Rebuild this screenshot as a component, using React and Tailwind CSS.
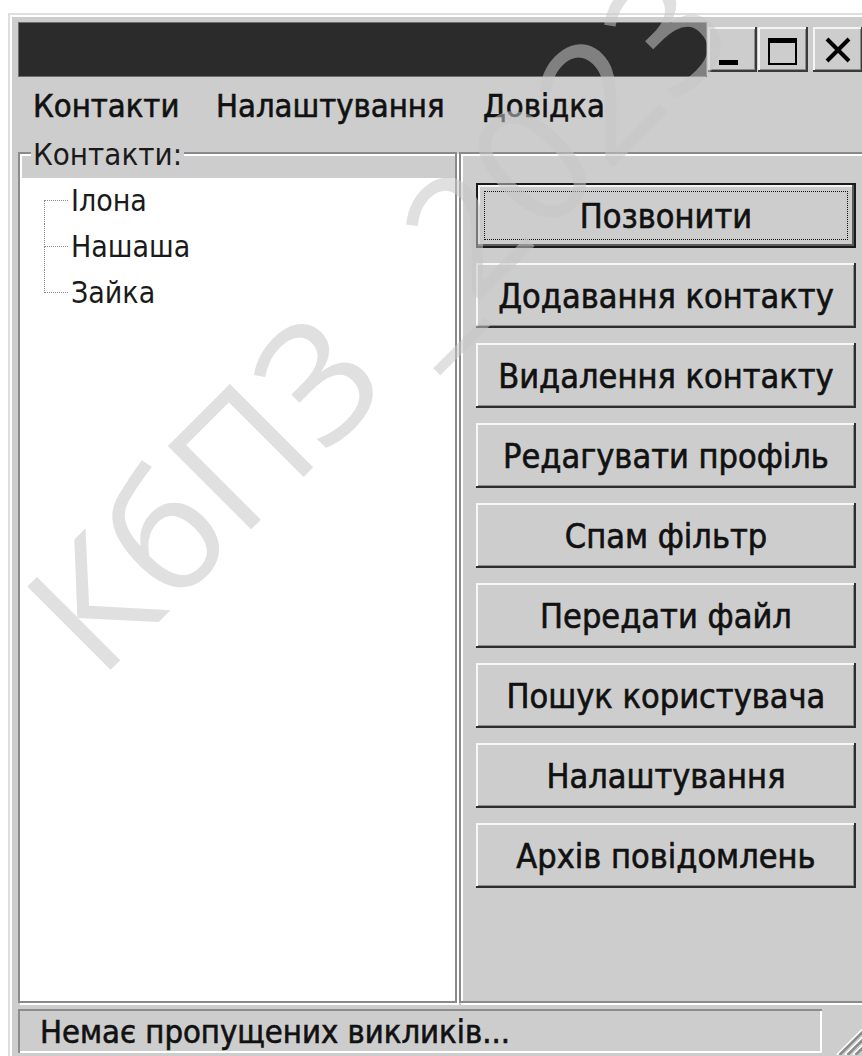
import React from "react";

const UI = "font-['DejaVu_Sans_Condensed','DejaVu_Sans',sans-serif]";

const buttons = [
  "Позвонити",
  "Додавання контакту",
  "Видалення контакту",
  "Редагувати профіль",
  "Спам фільтр",
  "Передати файл",
  "Пошук користувача",
  "Налаштування",
  "Архів повідомлень",
];

const contacts = ["Ілона", "Нашаша", "Зайка"];

function CaptionButton({ className, children }) {
  return (
    <div
      className={
        "h-[45px] bg-[#cdcdcd] flex shadow-[inset_-2px_-2px_0_#3a3a3a,inset_2px_2px_0_#f4f4f4,inset_-3px_-3px_0_#8c8c8c] " +
        className
      }
    >
      {children}
    </div>
  );
}

function ActionButton({ label, isDefault }) {
  if (isDefault) {
    return (
      <div className="w-[380px] h-[65px] border-2 border-[#1a1a1a] bg-[#cdcdcd] shadow-[inset_-2px_-2px_0_#5a5a5a,inset_2px_2px_0_#f4f4f4] p-[6px]">
        <div className="w-full h-full border border-dotted border-[#111111] flex items-center justify-center">
          <span className="text-[34px] leading-[38px] text-[#111111] [-webkit-text-stroke:0.6px_#111111]">
            {label}
          </span>
        </div>
      </div>
    );
  }
  return (
    <div className="w-[380px] h-[65px] bg-[#cdcdcd] shadow-[inset_-2px_-2px_0_#2e2e2e,inset_2px_2px_0_#f7f7f7,inset_-3px_-3px_0_#8c8c8c] flex items-center justify-center">
      <span className="text-[34px] leading-[38px] text-[#111111] [-webkit-text-stroke:0.6px_#111111]">
        {label}
      </span>
    </div>
  );
}

function TreeRow({ label, first, last }) {
  return (
    <div className="h-[46px] flex">
      <div className="ml-[24px] w-[24px] h-full flex flex-col">
        <div
          className={
            "h-1/2 border-b border-dotted border-[#8a8a8a] " +
            (first ? "" : "border-l")
          }
        />
        <div
          className={
            "h-1/2 border-dotted border-[#8a8a8a] " + (last ? "" : "border-l")
          }
        />
      </div>
      <div className="ml-[3px] flex items-center text-[30px] leading-[34px] text-[#1a1a1a]">
        {label}
      </div>
    </div>
  );
}

export default function App() {
  return (
    <div className={"relative w-[862px] h-[1056px] overflow-hidden bg-white " + UI}>
      {/* window */}
      <div className="ml-[8px] mt-[13px] w-[880px] h-[1060px] bg-[#cdcdcd] border-t-2 border-l-2 border-[#dedede] shadow-[inset_2px_2px_0_#ffffff] pt-[7px] pl-[8px] flex flex-col">
        {/* caption */}
        <div className="h-[55px] flex items-center">
          <div className="w-[689px] h-full bg-[#2b2b2b] border border-[#6e6e6e]" />
          <CaptionButton className="ml-[1px] w-[49px] items-start pt-[33px] pl-[11px]">
            <div className="w-[19px] h-[5px] bg-black" />
          </CaptionButton>
          <CaptionButton className="ml-[1px] w-[50px] items-start pt-[11px] pl-[10px]">
            <div className="w-[29px] h-[27px] border-2 border-t-[5px] border-black" />
          </CaptionButton>
          <CaptionButton className="ml-[5px] w-[50px] items-start pt-[10px] pl-[12px]">
            <svg width="26" height="26" viewBox="0 0 26 26">
              <path d="M2 2 L24 24 M24 2 L2 24" stroke="#000" strokeWidth="4" fill="none" />
            </svg>
          </CaptionButton>
        </div>

        {/* menu */}
        <div className="h-[75px] flex items-start pt-[11px] text-[32.5px] leading-[36px] text-[#111111] [-webkit-text-stroke:0.6px_#111111]">
          <div className="w-[181px] pl-[15px]">Контакти</div>
          <div className="w-[267px] pl-[17px]">Налаштування</div>
          <div className="pl-[17px]">Довідка</div>
        </div>

        {/* panels */}
        <div className="h-[851px] flex">
          <div className="relative w-[440px] h-full border-2 border-[#8a8a8a] shadow-[2px_2px_0_#ffffff,inset_2px_2px_0_#ffffff] pt-[24px] flex flex-col">
            <div className="absolute left-[11px] top-[-18px] px-[2px] bg-[#cdcdcd] text-[31px] leading-[36px] text-[#1a1a1a]">
              Контакти:
            </div>
            <div className="flex-1 bg-white flex flex-col">
              {contacts.map((c, i) => (
                <TreeRow key={c} label={c} first={i === 0} last={i === contacts.length - 1} />
              ))}
            </div>
          </div>

          <div className="ml-[2px] w-[430px] h-full border-2 border-[#8a8a8a] shadow-[2px_2px_0_#ffffff,inset_2px_2px_0_#ffffff] pt-[29px] pl-[15px] flex flex-col gap-[15px]">
            {buttons.map((b, i) => (
              <ActionButton key={b} label={b} isDefault={i === 0} />
            ))}
          </div>
        </div>

        {/* status bar */}
        <div className="mt-[6px] flex items-start">
          <div className="w-[804px] h-[44px] border-t-2 border-l-2 border-[#8c8c8c] shadow-[inset_-2px_-2px_0_#ffffff] pl-[20px] flex items-center text-[32.5px] leading-[40px] text-[#111111] [-webkit-text-stroke:0.6px_#111111]">
            Немає пропущених викликів...
          </div>
          <svg className="ml-[11px] mt-[14px]" width="32" height="32" viewBox="0 0 32 32">
            <path d="M4 32 L32 4" stroke="#ffffff" strokeWidth="2" />
            <path d="M6.5 32 L32 6.5" stroke="#8a8a8a" strokeWidth="2.5" />
            <path d="M12 32 L32 12" stroke="#ffffff" strokeWidth="2" />
            <path d="M14.5 32 L32 14.5" stroke="#8a8a8a" strokeWidth="2.5" />
            <path d="M20 32 L32 20" stroke="#ffffff" strokeWidth="2" />
            <path d="M22.5 32 L32 22.5" stroke="#8a8a8a" strokeWidth="2.5" />
          </svg>
        </div>
      </div>

      {/* diagonal watermark */}
      <div className="pointer-events-none absolute left-[-4px] top-[578px] origin-top-left -rotate-45 whitespace-nowrap font-['Open_Sans',sans-serif] text-[165px] leading-none text-[rgba(198,198,198,0.55)]">
        КбПЗ _2023
      </div>
    </div>
  );
}
